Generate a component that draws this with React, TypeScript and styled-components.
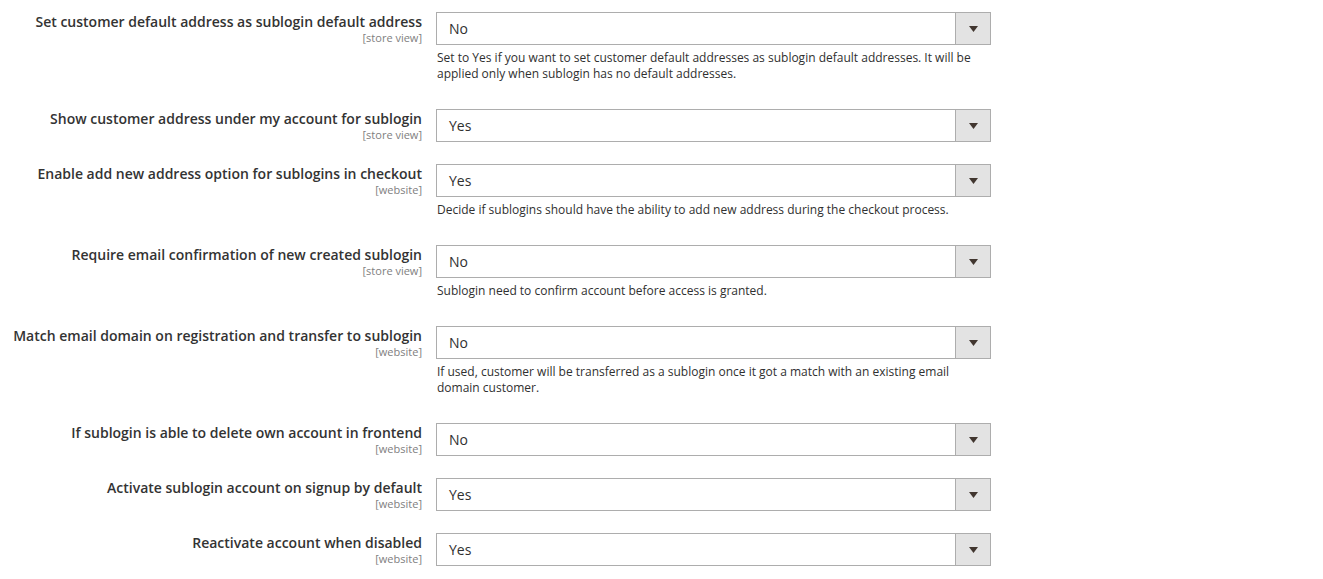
import styled, { createGlobalStyle } from 'styled-components';

const GlobalStyle = createGlobalStyle`
  body {
    margin: 0;
    background: #ffffff;
    font-family: 'Open Sans', 'Liberation Sans', sans-serif;
    color: #303030;
  }
`;

type Field = {
  label: string;
  scope: string;
  value: string;
  note?: string;
};

const fields: Field[] = [
  {
    label: 'Set customer default address as sublogin default address',
    scope: '[store view]',
    value: 'No',
    note: 'Set to Yes if you want to set customer default addresses as sublogin default addresses. It will be applied only when sublogin has no default addresses.',
  },
  {
    label: 'Show customer address under my account for sublogin',
    scope: '[store view]',
    value: 'Yes',
  },
  {
    label: 'Enable add new address option for sublogins in checkout',
    scope: '[website]',
    value: 'Yes',
    note: 'Decide if sublogins should have the ability to add new address during the checkout process.',
  },
  {
    label: 'Require email confirmation of new created sublogin',
    scope: '[store view]',
    value: 'No',
    note: 'Sublogin need to confirm account before access is granted.',
  },
  {
    label: 'Match email domain on registration and transfer to sublogin',
    scope: '[website]',
    value: 'No',
    note: 'If used, customer will be transferred as a sublogin once it got a match with an existing email domain customer.',
  },
  {
    label: 'If sublogin is able to delete own account in frontend',
    scope: '[website]',
    value: 'No',
  },
  {
    label: 'Activate sublogin account on signup by default',
    scope: '[website]',
    value: 'Yes',
  },
  {
    label: 'Reactivate account when disabled',
    scope: '[website]',
    value: 'Yes',
  },
];

const ConfigForm = styled.div`
  padding-top: 12px;
  display: flex;
  flex-direction: column;
`;

const Row = styled.div`
  display: flex;
  gap: 14px;
  padding-bottom: 22px;
`;

const LabelCell = styled.div`
  width: 422px;
  flex: none;
  padding-top: 1px;
  text-align: right;
  display: flex;
  flex-direction: column;
`;

const LabelText = styled.span`
  font-size: 14px;
  font-weight: 600;
  line-height: 18px;
  color: #333333;
`;

const Scope = styled.span`
  font-size: 11px;
  line-height: 14px;
  color: #808080;
`;

const ValueCell = styled.div`
  width: 555px;
  flex: none;
`;

const Select = styled.div`
  height: 33px;
  box-sizing: border-box;
  border: 1px solid #adadad;
  display: flex;
  align-items: stretch;
  background: #ffffff;
`;

const SelectValue = styled.span`
  flex: 1;
  padding: 1px 0 0 12px;
  font-size: 14px;
  line-height: 30px;
  color: #303030;
`;

const ArrowBox = styled.span`
  width: 34px;
  flex: none;
  background: #e3e3e3;
  border-left: 1px solid #adadad;
  display: flex;
  align-items: center;
  justify-content: center;
`;

const Note = styled.div`
  margin-top: 5px;
  padding: 0 8px 5px 1px;
  font-size: 12px;
  line-height: 16px;
  color: #303030;
`;

function Arrow() {
  return (
    <svg width="9" height="6" viewBox="0 0 9 6">
      <path d="M0 0 H9 L4.5 6 Z" fill="#41362f" />
    </svg>
  );
}

export default function App() {
  return (
    <>
      <GlobalStyle />
      <ConfigForm>
        {fields.map((f) => (
          <Row key={f.label}>
            <LabelCell>
              <LabelText>{f.label}</LabelText>
              <Scope>{f.scope}</Scope>
            </LabelCell>
            <ValueCell>
              <Select>
                <SelectValue>{f.value}</SelectValue>
                <ArrowBox>
                  <Arrow />
                </ArrowBox>
              </Select>
              {f.note && <Note>{f.note}</Note>}
            </ValueCell>
          </Row>
        ))}
      </ConfigForm>
    </>
  );
}
